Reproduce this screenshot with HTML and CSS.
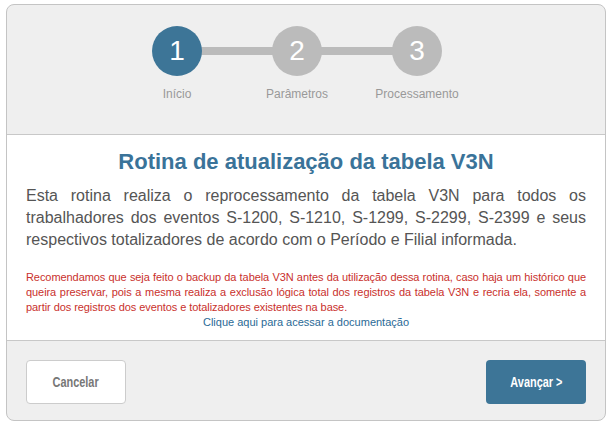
FILE: index.html
```html
<!DOCTYPE html>
<html lang="pt-BR">
<head>
    <meta charset="UTF-8">
    <title>Rotina de atualização da tabela V3N</title>
    <link rel="stylesheet" href="styles.css">
</head>
<body>
    <div class="wizard">
        <div class="wizard-header">
            <ol class="steps">
                <li class="step active">
                    <span class="step-number">1</span>
                    <span class="step-label">Início</span>
                </li>
                <li class="step">
                    <span class="step-number">2</span>
                    <span class="step-label">Parâmetros</span>
                </li>
                <li class="step">
                    <span class="step-number">3</span>
                    <span class="step-label">Processamento</span>
                </li>
            </ol>
        </div>

        <div class="wizard-body">
            <h1>Rotina de atualização da tabela V3N</h1>
            <p class="description">Esta rotina realiza o reprocessamento da tabela V3N para todos os trabalhadores dos eventos S-1200, S-1210, S-1299, S-2299, S-2399 e seus respectivos totalizadores de acordo com o Período e Filial informada.</p>
            <p class="warning">Recomendamos que seja feito o backup da tabela V3N antes da utilização dessa rotina, caso haja um histórico que queira preservar, pois a mesma realiza a exclusão lógica total dos registros da tabela V3N e recria ela, somente a partir dos registros dos eventos e totalizadores existentes na base.</p>
            <a href="#" class="doc-link">Clique aqui para acessar a documentação</a>
        </div>

        <div class="wizard-footer">
            <button class="button button-cancel"><span>Cancelar</span></button>
            <button class="button button-next"><span>Avançar &gt;</span></button>
        </div>
    </div>
</body>
</html>
```

FILE: styles.css
```css
body {
    margin: 0;
    padding: 4px 6px;
    font-family: "Liberation Sans", Arial, sans-serif;
    background-color: #fff;
    color: #555;
}
.wizard {
    width: 598px;
    border: 1px solid #c4c4c4;
    border-radius: 8px;
    background-color: #efefef;
    overflow: hidden;
}
.wizard-header {
    padding: 21px 0 33px;
    border-bottom: 1px solid #c8c8c8;
}
.steps {
    list-style: none;
    margin: 0;
    padding: 0 0 0 110px;
    display: grid;
    grid-template-columns: repeat(3, 120px);
}
.step {
    position: relative;
    display: flex;
    flex-direction: column;
    align-items: center;
}
.step + .step::before {
    content: "";
    position: absolute;
    top: 21px;
    left: -60px;
    width: 120px;
    height: 8px;
    background-color: #bbb;
}
.step-number {
    position: relative;
    z-index: 1;
    width: 50px;
    height: 50px;
    border-radius: 50%;
    background-color: #bbb;
    color: #fff;
    font-size: 28px;
    line-height: 50px;
    text-align: center;
}
.step.active .step-number {
    background-color: #3d7597;
}
.step-label {
    margin-top: 11px;
    font-size: 12px;
    line-height: 14px;
    color: #999;
}
.wizard-body {
    background-color: #fff;
    padding: 14px 19px 10px;
    text-align: center;
    border-bottom: 1px solid #c8c8c8;
}
h1 {
    margin: 0 0 10px;
    font-size: 22px;
    line-height: 26px;
    color: #3a7399;
}
.description {
    margin: 0 0 19px;
    font-size: 16px;
    line-height: 22px;
    text-align: justify;
    color: #555;
}
.warning {
    margin: 0;
    font-size: 11px;
    line-height: 15px;
    letter-spacing: -0.07px;
    text-align: justify;
    color: #c9302c;
}
.doc-link {
    display: block;
    font-size: 11px;
    line-height: 15px;
    color: #2a6a96;
    text-decoration: none;
}
.wizard-footer {
    display: flex;
    justify-content: space-between;
    padding: 19px 19px 16px;
}
.button {
    width: 100px;
    height: 44px;
    border-radius: 4px;
    font-family: "Liberation Sans", Arial, sans-serif;
    font-size: 14px;
    font-weight: bold;
    cursor: pointer;
}
.button span {
    display: inline-block;
    transform: scaleX(0.78);
}
.button-cancel {
    background-color: #fff;
    border: 1px solid #ccc;
    color: #777;
}
.button-next {
    background-color: #3d7597;
    border: none;
    color: #fff;
}
```
